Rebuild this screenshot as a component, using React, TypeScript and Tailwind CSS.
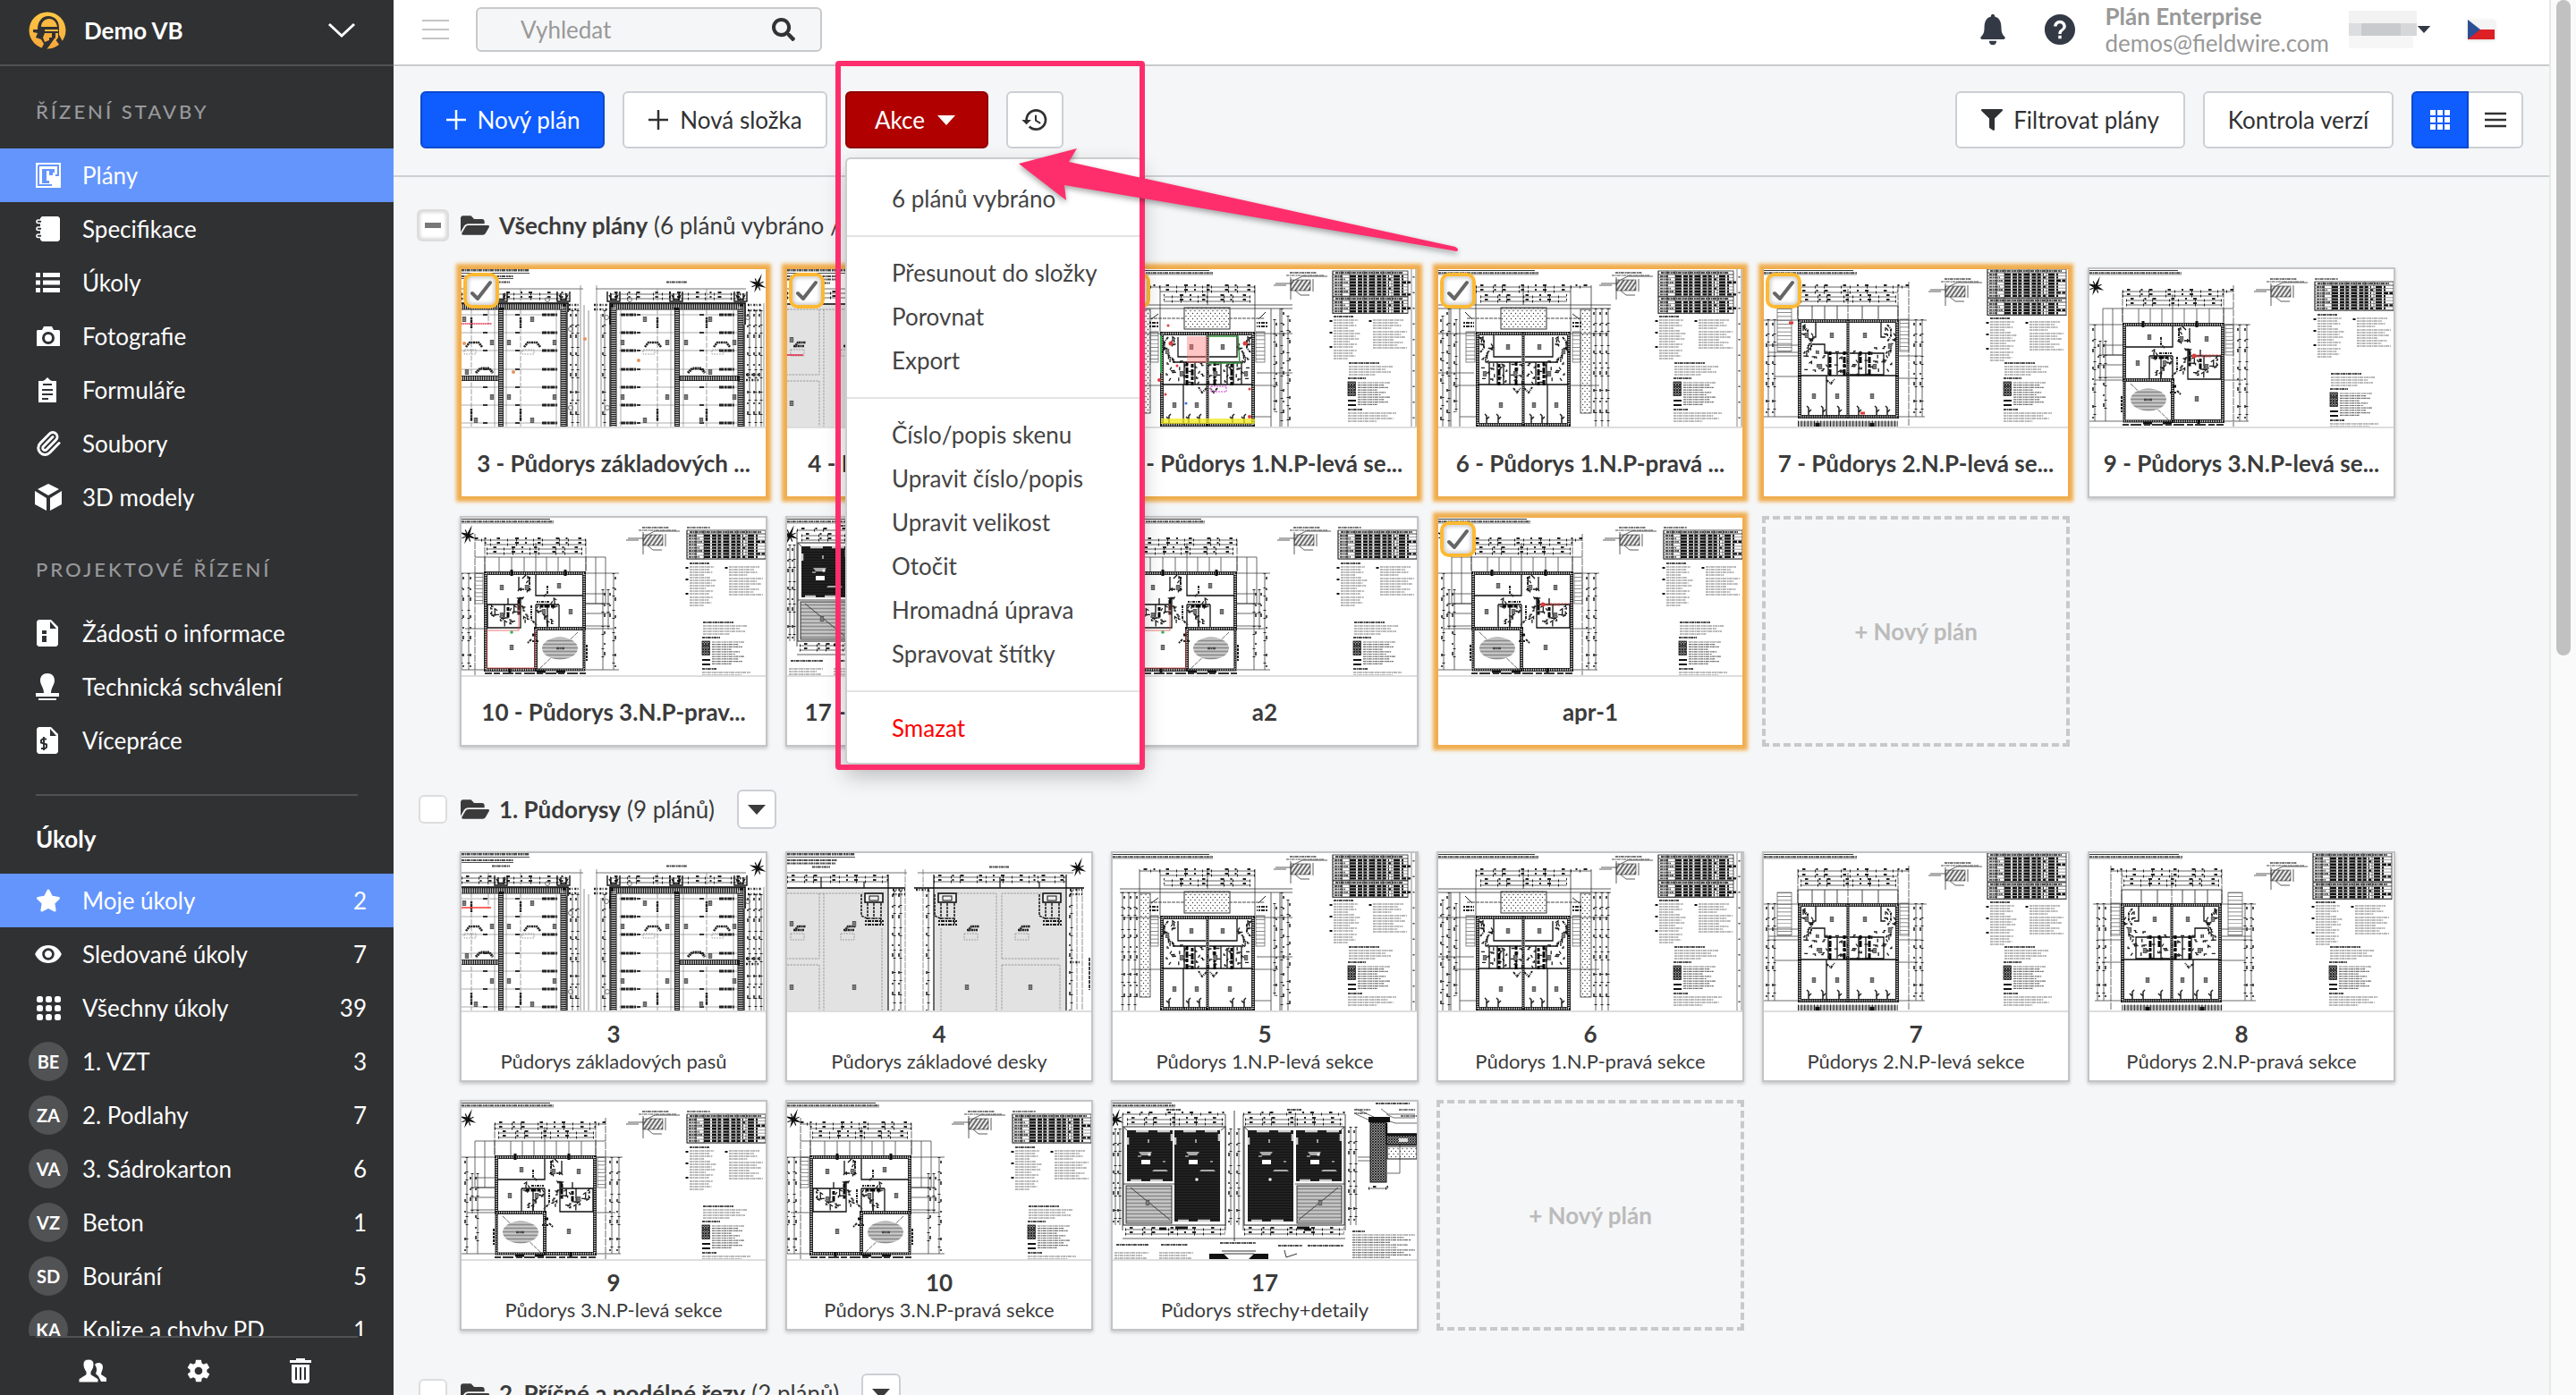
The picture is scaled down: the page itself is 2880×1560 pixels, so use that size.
import type { ReactNode } from "react";
import { FaFilter, FaFolderOpen, FaSearch, FaStar } from "react-icons/fa";
import { IoIosNotifications, IoMdEye, IoMdHelpCircle, IoMdSettings } from "react-icons/io";
import { MdHistory } from "react-icons/md";
import { Paperclip } from "lucide-react";

type PlanKind = "footing" | "slab" | "first" | "firstFlip" | "second" | "secondFlip" | "third" | "thirdFlip" | "roof";

type Sheet = {
  kind: PlanKind;
  title: string;
  subtitle?: string;
  selected?: boolean;
  marks?: ReactNode;
};

/* ---------- drawing helpers for the plan thumbnails ---------- */

function Words({ x, y, w, h = 2 }: { x: number; y: number; w: number; h?: number }) {
  return <path d={`M${x} ${y}h${w}`} stroke="#4a4a4a" strokeWidth={h} strokeDasharray="3 .6 1.4 .5 4.2 .9 2 .5" />;
}

function Paragraph({ x, y, w, rows, step = 3 }: { x: number; y: number; w: number; rows: number; step?: number }) {
  const widths = [1, 0.82, 0.94, 0.6, 0.88, 0.72];
  return (
    <g opacity=".8">
      {Array.from({ length: rows }, (_, i) => (
        <Words key={i} x={x} y={y + i * step} w={w * widths[i % 6]} h={1.2} />
      ))}
    </g>
  );
}

function DimH({ x, to, y }: { x: number; to: number; y: number }) {
  return (
    <g stroke="#222">
      <path d={`M${x} ${y}H${to}`} strokeWidth=".7" />
      <path d={`M${x + 5} ${y - 2}H${to}`} strokeWidth="1.8" strokeDasharray="3.5 12 2 7 4 17" />
      <path d={`M${x} ${y}H${to}`} strokeWidth="3" strokeDasharray="1 18 1 9" />
    </g>
  );
}

function DimV({ x, y, to }: { x: number; y: number; to: number }) {
  return (
    <g stroke="#222">
      <path d={`M${x} ${y}V${to}`} strokeWidth=".7" />
      <path d={`M${x - 2} ${y + 4}V${to}`} strokeWidth="1.6" strokeDasharray="3 10 2 8 4 16" />
      <path d={`M${x} ${y}V${to}`} strokeWidth="3" strokeDasharray="1 15 1 8" />
    </g>
  );
}

function Wall({ d, w = 4 }: { d: string; w?: number }) {
  return (
    <g fill="none">
      <path d={d} stroke="#161616" strokeWidth={w} strokeLinecap="square" />
      <path d={d} stroke="#fff" strokeWidth={w - 1.6} strokeDasharray="1 1" opacity=".75" />
    </g>
  );
}

// Small fittings, switches and door swings scattered over a room
function Fittings({ x, y, w, h, n }: { x: number; y: number; w: number; h: number; n: number }) {
  const shapes = ["h3v2", "v4", "h2v-2h2", "l2 3", "v2h-2", "h4", "l3 -2v3"];
  const d = Array.from({ length: n }, (_, i) => {
    const px = x + ((i * 37 + 11) % 97) * (w / 97);
    const py = y + ((i * 53 + 29) % 89) * (h / 89);
    return `M${px.toFixed(1)} ${py.toFixed(1)}${shapes[i % shapes.length]}`;
  });
  return <path d={d.join("")} fill="none" stroke="#1c1c1c" strokeWidth="1.3" />;
}

function Tags({ at }: { at: number[][] }) {
  return (
    <g>
      {at.map(([x, y]) => (
        <g key={`${x}-${y}`}>
          <rect x={x - 2.2} y={y - 3} width="4.4" height="6" fill="#555" />
          <path d={`M${x - 1.5} ${y - 1}h3M${x - 1.5} ${y + 1.2}h3`} stroke="#ddd" strokeWidth=".6" />
        </g>
      ))}
    </g>
  );
}

function Compass({ x, y }: { x: number; y: number }) {
  return (
    <g transform={`translate(${x} ${y}) rotate(22)`}>
      <path d="M0-13L1.5-2L10 0L1.5 1.5L0 10L-1.5 1.5L-10 0L-1.5-2Z" fill="#111" />
      <path d="M-5-5L5 5M5-5L-5 5" stroke="#111" strokeWidth="1.2" />
    </g>
  );
}

function SheetHead({ w = 110 }: { w?: number }) {
  return (
    <g>
      <path d={`M0 1.5H${w - 4}`} stroke="#333" strokeWidth="1" />
      <Words x={0} y={4.2} w={w} h={2} />
      <path d={`M0 6H${w}`} stroke="#555" strokeWidth=".6" />
    </g>
  );
}

function EaveDetail({ x, y }: { x: number; y: number }) {
  return (
    <g>
      <Words x={x} y={y - 3} w={30} h={1.6} />
      <Words x={x - 4} y={y} w={42} h={1} />
      <rect x={x + 1} y={y + 5} width="22" height="12" fill="url(#hatch)" stroke="#333" strokeWidth=".6" />
      <path
        d={`M${x + 1} ${y + 2}v25M${x - 16} ${y + 9}h17M${x - 18} ${y + 11}h14M${x + 6} ${y + 5}l8-4h28M${x + 26} ${y + 4}v14M${x + 6} ${y + 17}l6 5h10`}
        fill="none"
        stroke="#333"
        strokeWidth=".8"
      />
    </g>
  );
}

function Schedule({ x, y, rows, w = 88 }: { x: number; y: number; rows: number; w?: number }) {
  const cols = [0, 10, 19, 35, 46, 56, 66];
  return (
    <g>
      <rect x={x} y={y} width={w} height={rows * 3.4 + 5} fill="#fff" stroke="#222" strokeWidth=".8" />
      <path d={`M${x} ${y + 4}h${w}`} stroke="#222" strokeWidth=".8" />
      <Words x={x + 3} y={y + 2} w={w - 8} h={2} />
      {Array.from({ length: rows }, (_, i) => (
        <g key={i}>
          <path d={`M${x} ${y + 7.6 + i * 3.4}h${w}`} stroke="#333" strokeWidth=".5" />
          <Words x={x + 2} y={y + 6 + i * 3.4} w={9 + (i % 3) * 3} h={1.8} />
          <path
            d={`M${x + 19} ${y + 6 + i * 3.4}h${i % 3 === 1 ? 46 : 44}M${x + 68} ${y + 6 + i * 3.4}h${i % 4 === 2 ? 19 : 11}`}
            stroke="#111"
            strokeWidth="2.4"
            strokeDasharray="7 2 5 1.4 4 2"
          />
        </g>
      ))}
      <path d={cols.map((c) => `M${x + c} ${y}v${rows * 3.4 + 5}`).join("")} stroke="#222" strokeWidth=".6" />
    </g>
  );
}

function Notes({ x, y }: { x: number; y: number }) {
  return (
    <g>
      <Words x={x} y={y} w={22} h={2} />
      <Paragraph x={x} y={y + 4} w={27} rows={5} />
      <Paragraph x={x} y={y + 19} w={30} rows={6} />
      <Paragraph x={x} y={y + 38} w={26} rows={4} />
      <Paragraph x={x + 44} y={y + 4} w={34} rows={4} />
      <Paragraph x={x + 44} y={y + 17} w={38} rows={7} />
      <path d={`M${x - 3} ${y + 4}v2M${x - 3} ${y + 17}v2M${x - 3} ${y + 33}v2M${x + 41} ${y + 4}v2`} stroke="#111" strokeWidth="3" />
    </g>
  );
}

function Legend({ x, y }: { x: number; y: number }) {
  return (
    <g>
      <Words x={x + 1} y={y - 19} w={34} h={1.8} />
      <Paragraph x={x + 1} y={y - 15} w={50} rows={4} />
      <Words x={x} y={y - 2} w={20} h={2} />
      {[0, 5.5, 11].map((dy) => (
        <rect key={dy} x={x} y={y + dy + 2} width="8.5" height="4.5" fill="url(#dense)" stroke="#222" strokeWidth=".8" />
      ))}
      <path d={`M${x} ${y + 23}h9M${x} ${y + 28}h9`} stroke="#111" strokeWidth="1.8" />
      <Paragraph x={x + 11} y={y + 3} w={36} rows={10} step={2.7} />
      <Words x={x} y={y + 33} w={16} h={2} />
      <Paragraph x={x} y={y + 37} w={54} rows={4} />
    </g>
  );
}

function Stairs({ x, y, w = 13, h = 40 }: { x: number; y: number; w?: number; h?: number }) {
  return (
    <g>
      <rect x={x} y={y} width={w} height={h} fill="none" stroke="#555" strokeWidth=".7" />
      <path d={`M${x + w / 2} ${y}v${h}`} stroke="#666" strokeWidth={w} strokeDasharray=".7 3.6" />
    </g>
  );
}

function Footing() {
  const rows = [51, 71, 91, 112, 132, 152, 172];
  const boxes = [[3, 56], [79, 56], [205, 56], [278, 56], [34, 82], [53, 82], [104, 82], [180, 82], [230, 82], [251, 82], [305, 82], [34, 143], [53, 143], [104, 143], [180, 143], [230, 143], [251, 143], [305, 143], [6, 115], [278, 115], [16, 169], [79, 169], [205, 169], [268, 169]];
  return (
    <g>
      <Words x={0} y={1} w={76} h={3} />
      <path d="M0 4.5H76M0 10.5H58" stroke="#222" strokeWidth=".8" />
      <Words x={0} y={8} w={58} h={2} />
      <Words x={34} y={14.5} w={20} h={2} />
      <Words x={229} y={14.5} w={23} h={2} />
      <Compass x={331} y={17} />
      <path d="M0 22H136M150 22H318" stroke="#333" strokeWidth=".7" />
      <DimH x={0} to={120} y={28} />
      <DimH x={0} to={120} y={33} />
      <DimH x={166} to={318} y={28} />
      <DimH x={166} to={318} y={33} />
      {[44, 114, 170, 240, 312].map((x) => (
        <path key={x} d={`M${x - 7} 25v11h14V25M${x - 5} 29l3 5h4l3-5M${x - 3} 27v8M${x + 3} 27v8`} fill="none" stroke="#111" strokeWidth="1.4" />
      ))}
      {rows.map((y) => (
        <g key={y}>
          <path d={`M0 ${y}H108M176 ${y}H308`} stroke="#777" strokeWidth=".6" />
          <path d={`M24 ${y}h5M60 ${y}h5M196 ${y}h4M266 ${y}h5`} stroke="#333" strokeWidth="1.8" />
          {[90, 178, 288].map((x) => (
            <path key={x} d={`M${x} ${y}h17`} stroke="#222" strokeWidth="3.2" strokeDasharray="5 .7 3 .7" />
          ))}
        </g>
      ))}
      <path d="M30 22V62M66 22V176M219 22V176M274 22V176M11 44V176" stroke="#777" strokeWidth=".7" strokeDasharray="6 1.5" />
      {[70, 205, 282, 5].map((x) => (
        <g key={x}>
          <path d={`M${x} 87l4-5h10l4 5`} stroke="#222" strokeWidth="2.6" strokeDasharray="2 .6" fill="none" />
          <rect x={x - 2} y="90" width="13" height="5" fill="none" stroke="#888" strokeWidth=".7" strokeDasharray="2 1" />
        </g>
      ))}
      {[66, 219, 274, 11].map((x) => (
        <path key={x} d={`M${x} 54v12M${x} 156v14`} stroke="#222" strokeWidth="2.4" strokeDasharray="2 .5 4 .7" />
      ))}
      <path d="M16 116l5-5h10l4 5M253 116l5-5h10l4 5" stroke="#222" strokeWidth="3" strokeDasharray="2 .5" fill="none" />
      <Tags at={boxes} />
      <Wall d="M0 42H114V176" w={7} />
      <Wall d="M44 46V176M0 122H42" w={6} />
      <Wall d="M170 176V42H312V176" w={7} />
      <Wall d="M241 46V176M245 122H308" w={6} />
      <path d="M0 38H119V48M166 62V38H317V62" fill="none" stroke="#000" strokeWidth="1.6" />
      <path d="M118 48V176M166 48V176M316 62V176" stroke="#111" strokeWidth="1.2" />
      <path d="M37 46V176M50 46V176M106 46V176M178 46V176M234 46V176M248 46V176M304 46V176" stroke="#777" strokeWidth=".6" />
      {[124, 130, 160, 322, 329, 335].map((x) => (
        <DimV key={x} x={x} y={46} to={176} />
      ))}
      <path d="M133 18V176M137 40V176M142 46V176M151 18V176M156 50V176M338 38V176" stroke="#777" strokeWidth=".8" />
      <path d="M120 40h12M120 45h12M148 40h16M148 45h16M320 40h16M320 46h16M318 118h14M318 124h14" stroke="#222" strokeWidth="2.4" strokeDasharray="2 1.3 1 2" />
      <g fill="none" stroke="#555" strokeWidth=".8">
        <circle cx="122" cy="67" r="2.500" />
        <circle cx="122" cy="155" r="2.500" />
        <circle cx="162" cy="54" r="2.500" />
        <circle cx="320" cy="54" r="2.500" />
        <circle cx="163" cy="155" r="2.500" />
        <circle cx="96" cy="34" r="2.500" />
        <circle cx="188" cy="34" r="2.500" />
      </g>
    </g>
  );
}

function Slab() {
  return (
    <g>
      <Words x={0} y={1} w={76} h={3} />
      <path d="M0 4.5H76" stroke="#222" strokeWidth=".8" />
      <Words x={0} y={8} w={56} h={2} />
      <Words x={0} y={11.5} w={54} h={2} />
      <Words x={28} y={15.5} w={20} h={2} />
      <Words x={226} y={15.5} w={22} h={2} />
      <Compass x={325} y={17} />
      <path d="M0 40H113V176H0ZM164 40H312V176H164Z" fill="#e2e2e2" />
      <path d="M0 22H134M146 22H320" stroke="#333" strokeWidth=".7" />
      <DimH x={0} to={113} y={27} />
      <DimH x={0} to={113} y={32} />
      <DimH x={164} to={312} y={27} />
      <DimH x={164} to={312} y={32} />
      <path d="M0 39H132M142 39H332" stroke="#000" strokeWidth="1.6" />
      <path d="M113 24V176M164 24V176M312 24V176M38 27V39M86 32V39M238 27V39M282 32V39" stroke="#111" strokeWidth="1.2" />
      <path d="M0 45H86M36 45V118H0M41 45V176M36 125V176M0 125H36M106 84V176M172 84V176M190 45H234V176M240 118V45H284M240 118H305M240 125V176M240 125H305V176" fill="none" stroke="#888" strokeWidth=".8" strokeDasharray="2.4 1.2" />
      {[87, 169, 286].map((x) => (
        <g key={x}>
          <rect x={x} y="45" width="20" height="10" fill="#eee" stroke="#111" strokeWidth="1.6" />
          <rect x={x + 5} y="48" width="10" height="5" fill="none" stroke="#111" strokeWidth="1" />
          <path d={`M${x + 3} 56V74M${x + 10} 56V74M${x + 18} 56V80M${x - 4} 46v24l6 3h17`} fill="none" stroke="#222" strokeWidth="1.6" strokeDasharray="3 1" />
          <path d={`M${x} 76h21M${x} 80h21`} stroke="#111" strokeWidth="1.8" strokeDasharray="2 1 4 1" />
        </g>
      ))}
      {[8, 64, 202, 259].map((x) => (
        <g key={x}>
          <path d={`M${x} 87l4-5h9M${x - 1} 86h12`} fill="none" stroke="#222" strokeWidth="2.6" strokeDasharray="2 .5" />
          <rect x={x - 4} y="90" width="15" height="7" fill="none" stroke="#888" strokeWidth=".7" strokeDasharray="2 1" />
        </g>
      ))}
      <Tags at={[[5, 79], [75, 79], [5, 150], [75, 150], [201, 150], [272, 150]]} />
      {[120, 127, 158, 318].map((x) => (
        <DimV key={x} x={x} y={42} to={176} />
      ))}
      <path d="M132 18V176M152 18V176M324 40V176M330 40V176" stroke="#777" strokeWidth=".8" strokeDasharray="7 1" />
      <path d="M118 41h14M118 46h14M144 41h16M316 41h14M316 46h14M316 122h12" stroke="#222" strokeWidth="2.4" strokeDasharray="2 1.4 1 2" />
      <path d="M338 117v36" stroke="#444" strokeWidth="2" strokeDasharray="4 1" />
    </g>
  );
}

// Semi-detached floor with two mirrored flats
function FirstFloor({ flip }: { flip?: boolean }) {
  return (
    <g>
      <SheetHead w={112} />
      <EaveDetail x={198} y={7} />
      <Schedule x={246} y={2} rows={7} w={84} />
      <Schedule x={246} y={31} rows={4} w={84} />
      <Notes x={247} y={53} />
      <Legend x={263} y={124} />
      <path d="M334 0V176M339 0V176" stroke="#555" strokeWidth=".7" />
      <path d="M336.500 8V176" stroke="#444" strokeWidth="2" strokeDasharray="1.500 16" />
      <g transform={flip ? "translate(201 0) scale(-1 1)" : undefined}>
        <path d="M42 18V70M148 18V70M95 18V40M0 40H193M0 44H193M171 18V44M14 44V176M24 44V176" stroke="#333" strokeWidth=".8" />
        <DimH x={42} to={171} y={20} />
        <DimH x={42} to={148} y={25} />
        <DimH x={47} to={144} y={31} />
        <DimH x={47} to={144} y={36} />
        <rect x="70" y="43" width="51" height="24" fill="url(#dots)" stroke="#333" strokeWidth="1" />
        <rect x="159" y="45" width="12" height="116" fill="url(#dots)" stroke="#333" strokeWidth=".8" />
        <path d="M32 55H70M121 55H160" stroke="#333" strokeWidth=".9" strokeDasharray="4 1" />
        <path d="M28 60h12M28 64h12M150 60h10M150 64h10" stroke="#222" strokeWidth="2.2" strokeDasharray="2 1 4 1" />
        <Stairs x={31} y={70} w={10} h={34} />
        <Stairs x={150} y={70} w={9} h={34} />
        <Wall d="M44 72H146V174H44Z" />
        <Wall d="M95 72V174" w={3} />
        <path d="M62 74V98H93M57 104H93M57 104V129H91M80 104V129M97 98H128V76M97 104H134M109 104V129M121 104V129M44 129H146M122 129V174M66 104V129M73 108V129" fill="none" stroke="#111" strokeWidth="1.3" />
        <path d="M68 106V130M87 104V130M112 106V130M118 104V130" stroke="#000" strokeWidth="3" strokeDasharray="4 2 7 1" />
        <path d="M46 76l5 4v8l-4 5M139 76l4 5v8l4 5M84 133l4 5 4-5M96 133l5 5 4-6" fill="none" stroke="#222" strokeWidth="2" strokeDasharray="3 1 1 1" />
        <Fittings x={46} y={76} w={14} h={26} n={14} />
        <Fittings x={130} y={76} w={14} h={26} n={14} />
        <Fittings x={46} y={103} w={96} h={24} n={46} />
        {[54, 67, 104, 116, 138].map((x) => (
          <path key={x} d={`M${x} 172v-8l-2-2M${x} 168l3-3`} fill="none" stroke="#222" strokeWidth="1.5" />
        ))}
        <Tags at={[[78, 87], [113, 87], [52, 117], [86, 117], [70, 152], [107, 152], [132, 152], [124, 117], [140, 92]]} />
        <DimV x={5} y={52} to={176} />
        <DimV x={12} y={44} to={176} />
        <DimV x={20} y={56} to={160} />
        <DimV x={176} y={44} to={176} />
        <DimV x={183} y={44} to={176} />
        <DimV x={190} y={44} to={176} />
        <path d="M0 72H42M0 116H40M148 130H180M148 72H190M16 130H42M24 165H42" stroke="#444" strokeWidth=".8" />
        <path d="M30 48l8 8M150 50l8 6" stroke="#222" strokeWidth="1" />
      </g>
    </g>
  );
}

function SecondFloor({ flip }: { flip?: boolean }) {
  return (
    <g>
      <SheetHead w={104} />
      <EaveDetail x={202} y={14} />
      <Schedule x={250} y={0} rows={8} />
      <Schedule x={250} y={33} rows={4} />
      <Notes x={253} y={55} />
      <Legend x={268} y={124} />
      <g transform={flip ? "translate(186 0) scale(-1 1)" : undefined}>
        <path d="M38 18V56M150 18V56M94 22V56M162 14V176" stroke="#444" strokeWidth=".8" strokeDasharray="8 1" />
        <DimH x={38} to={162} y={20} />
        <DimH x={38} to={150} y={26} />
        <DimH x={41} to={148} y={31} />
        <DimH x={41} to={148} y={36} />
        <path d="M38 41H150M38 41V56M54 41V56M68 41V56M82 41V56M110 41V56M128 41V56M150 41V56" stroke="#333" strokeWidth=".9" />
        <path d="M38 170V176H150V170Z" fill="#bbb" />
        <path d="M38 173H150" stroke="#222" strokeWidth="7" strokeDasharray="1 2.6" />
        <Stairs x={15} y={44} w={16} h={48} />
        <Stairs x={152} y={56} w={10} h={36} />
        <Wall d="M40 58H149V165H40Z" />
        <Wall d="M94 58V165" w={3} />
        <path d="M58 60V76H54M131 60V76H136M54 84H68V94H94M96 94H134V118H96M72 94V118M82 94V118M114 94V118M38 119H150M70 119V165M106 94V118" fill="none" stroke="#111" strokeWidth="1.3" />
        <path d="M74 92V120M90 92V120M108 92V106M118 92V118" stroke="#000" strokeWidth="3" strokeDasharray="4 2 7 1" />
        <path d="M44 64l5 4v8l4 5v6M138 62l4 5v8l-4 6M70 124l5 4 4-5" fill="none" stroke="#222" strokeWidth="2" strokeDasharray="3 1 1 1" />
        <Fittings x={42} y={62} w={12} h={34} n={14} />
        <Fittings x={134} y={62} w={12} h={34} n={12} />
        <Fittings x={42} y={88} w={102} h={30} n={52} />
        {[50, 66, 84, 106, 126, 138].map((x) => (
          <path key={x} d={`M${x} 163v-8l-2-2M${x} 160l3-3`} fill="none" stroke="#222" strokeWidth="1.5" />
        ))}
        <Tags at={[[76, 74], [113, 74], [48, 74], [141, 86], [56, 142], [82, 142], [121, 142], [63, 109], [124, 109]]} />
        <path d="M60 176v-4M121 176v-4" stroke="#111" strokeWidth="5" />
        <DimV x={5} y={56} to={165} />
        <DimV x={12} y={56} to={165} />
        <DimV x={170} y={56} to={165} />
        <DimV x={177} y={56} to={165} />
        <path d="M0 57H38M5 85H38M5 93H38M5 97H38M12 120H38M0 165H180M150 57H182M150 97H176M150 122H172" stroke="#444" strokeWidth=".8" />
      </g>
    </g>
  );
}

function ThirdFloor({ flip }: { flip?: boolean }) {
  return (
    <g>
      <SheetHead w={103} />
      <Compass x={7} y={20} />
      <EaveDetail x={202} y={14} />
      <Words x={252} y={11} w={26} h={1.6} />
      <Schedule x={252} y={14} rows={8} />
      <Notes x={255} y={51} />
      <Legend x={269} y={136} />
      <g transform={flip ? "translate(176 0) scale(-1 1)" : undefined}>
        <path d="M37 24V60M150 24V60M93 28V44M161 18V176" stroke="#444" strokeWidth=".8" strokeDasharray="8 1" />
        <DimH x={37} to={161} y={25} />
        <DimH x={37} to={150} y={30} />
        <DimH x={41} to={148} y={35} />
        <DimH x={41} to={148} y={40} />
        <path d="M15 44H161M37 44V60M55 44V60M68 44V60M81 44V60M93 44V60M106 44V60M120 44V60M134 44V60M150 44V60M15 44V96H37M26 44V96M15 85H37" fill="none" stroke="#444" strokeWidth=".8" />
        <Stairs x={152} y={62} w={9} h={34} />
        <Wall d="M39 62H149V170H93V124H39Z" />
        <Wall d="M39 124V170H93" w={3} />
        <path d="M93 64V87H40M67 97H93M67 97V122M110 97H147V123H110ZM110 90V97H124V90M112 66V80H106M93 97V124M80 97V122M128 97V108M104 64l4 4" fill="none" stroke="#111" strokeWidth="1.3" />
        <path d="M112 92V110M124 100V112M72 99h16" stroke="#000" strokeWidth="3" strokeDasharray="4 1.500 6 1" />
        <path d="M100 66v14M78 94h14M80 76v8l4 4M98 98v16l-6 6" fill="none" stroke="#222" strokeWidth="2" strokeDasharray="3 1 1 1" />
        <Fittings x={98} y={64} w={14} h={54} n={18} />
        <Fittings x={112} y={99} w={32} h={20} n={24} />
        <Fittings x={68} y={90} w={24} h={30} n={18} />
        <path d="M46 128l44 42M40 126v40" stroke="#444" strokeWidth=".8" strokeDasharray="5 1" />
        <ellipse cx="66" cy="146" rx="20" ry="12.500" fill="url(#stripes)" />
        <Words x={61} y={146} w={9} h={2.4} />
        <path d="M36 142v18M90 138h7M98 136l4 4" stroke="#222" strokeWidth="2" strokeDasharray="3 1" />
        <Tags at={[[67, 76], [131, 78], [103, 78], [54, 105], [84, 105], [131, 109], [120, 145]]} />
        <path d="M60 172h10M82 172h10M122 168v6M60 58v7M120 58v7M93 131h4" stroke="#111" strokeWidth="3" />
        <path d="M37 174H150" stroke="#333" strokeWidth="2" strokeDasharray="7 2 12 3" />
        <DimV x={6} y={62} to={170} />
        <DimV x={12} y={80} to={125} />
        <DimV x={18} y={80} to={170} />
        <DimV x={168} y={62} to={170} />
        <DimV x={176} y={62} to={170} />
        <path d="M0 62H37M10 96H37M10 107H37M10 121H37M6 124H37M0 170H37M150 62H180M150 124H172M150 170H178" stroke="#444" strokeWidth=".8" />
      </g>
    </g>
  );
}

function Roof() {
  return (
    <g>
      <SheetHead w={70} />
      <Compass x={3} y={20} />
      <Words x={60} y={9} w={16} />
      <Words x={195} y={9} w={16} />
      <DimH x={11} to={126} y={14} />
      <DimH x={146} to={260} y={14} />
      <DimH x={16} to={124} y={20} />
      <DimH x={148} to={257} y={20} />
      <DimH x={16} to={124} y={25} />
      <DimH x={148} to={257} y={25} />
      <path d="M11 14V144M126 14V144M146 14V144M260 14V144M136 10V156M69 16V30M204 16V30" stroke="#333" strokeWidth=".9" />
      <rect x="12" y="28" width="114" height="110" fill="#fff" stroke="#222" strokeWidth="1" />
      <rect x="147" y="28" width="112" height="110" fill="#fff" stroke="#222" strokeWidth="1" />
      {[
        [16, 57],
        [69, 102],
        [151, 102],
        [205, 57],
      ].map(([x, h]) => (
        <g key={x}>
          <rect x={x} y="32" width="51" height={h} fill="#151515" />
          <rect x={x} y="32" width="51" height={h} fill="url(#tiles)" />
          <path d={`M${x + 10} 33h14M${x + 34} 33h14M${x + 1} 40v8M${x + 50} 36v8M${x + 4} ${h + 31}h12M${x + 26} ${h + 31}h14`} stroke="#ccc" strokeWidth="2.6" />
          <path d={`M${x + 13} 56h15l-3 4h-9zM${x + 30} 76h14l2 2H${x + 28}z`} fill="#aaa" />
          <rect x={x + 16} y="65" width="10" height="5" fill="#fff" />
          <circle cx={x + 25} cy={h > 60 ? 87 : 59} r="1.800" fill="#eee" />
          <path d={`M${x + 24} 42v4M${x + 12} 61h4M${x + 40} 67h3`} stroke="#eee" strokeWidth="1.200" />
        </g>
      ))}
      <rect x="15" y="94" width="51" height="42" fill="url(#stripes)" stroke="#333" strokeWidth="1" />
      <rect x="206" y="94" width="50" height="42" fill="url(#stripes)" stroke="#333" strokeWidth="1" />
      <path d="M12 92H69M204 92H260M20 96l44 36M252 96l-44 36M12 28l4 4M126 28l-5 4M147 28l4 4M259 28l-4 4" stroke="#333" strokeWidth=".9" />
      <Tags at={[[39, 113], [232, 113]]} />
      <DimH x={14} to={126} y={143} />
      <DimH x={147} to={259} y={143} />
      <DimH x={14} to={126} y={148} />
      <DimH x={147} to={259} y={148} />
      <path d="M11 153H260" stroke="#333" strokeWidth=".8" />
      <path d="M52 142h8M70 141h14M206 141h14M214 143h8" stroke="#111" strokeWidth="3" />
      <DimV x={3} y={30} to={138} />
      <DimV x={8} y={30} to={138} />
      <DimV x={132} y={30} to={138} />
      <DimV x={141} y={30} to={138} />
      <DimV x={266} y={28} to={138} />
      <DimV x={272} y={28} to={138} />
      <Words x={4} y={160} w={36} />
      <Words x={54} y={160} w={30} />
      <Words x={120} y={158} w={40} />
      <Words x={185} y={161} w={27} />
      <Words x={218} y={161} w={40} />
      <Paragraph x={2} y={169} w={38} rows={3} />
      <Paragraph x={52} y={169} w={38} rows={3} />
      <path d="M108 170h16l6 6h-22zM174 170h-16l-6 6h22z" fill="#111" />
      <path d="M124 170h34M122 167h38M192 166l2 8 12-4" fill="none" stroke="#333" strokeWidth="1" />
      <Words x={268} y={145} w={14} />
      <Paragraph x={268} y={149} w={70} rows={10} step={2.8} />
      <Words x={294} y={2} w={38} />
      <path d="M272 8l22 10M272 14l18 8M300 8l8 6h30M306 14l8 4h24M310 22l6 2h24M274 62h14M274 66h14M307 80h14v-40" fill="none" stroke="#444" strokeWidth=".8" />
      <Words x={270} y={9} w={18} h={1.4} />
      <Words x={270} y={13} w={14} h={1.4} />
      <Words x={320} y={9} w={18} h={1.4} />
      <Words x={322} y={16} w={18} h={1.4} />
      <rect x="286" y="17" width="24" height="6" fill="#111" />
      <rect x="288" y="23" width="18" height="67" fill="url(#dense)" stroke="#111" strokeWidth="1" />
      <path d="M306 36h34v12h-34z" fill="url(#dense)" stroke="#111" strokeWidth="1.6" />
      <path d="M306 24v13h34" fill="none" stroke="#111" strokeWidth="2.4" />
      <rect x="307" y="50" width="33" height="14" fill="url(#dots)" stroke="#111" strokeWidth="1" />
      <rect x="320" y="41" width="10" height="4" fill="#ddd" />
      <DimH x={286} to={308} y={97} />
    </g>
  );
}

function PlanDrawing({ kind }: { kind: PlanKind }) {
  switch (kind) {
    case "footing":
      return <Footing />;
    case "slab":
      return <Slab />;
    case "first":
      return <FirstFloor />;
    case "firstFlip":
      return <FirstFloor flip />;
    case "second":
      return <SecondFloor />;
    case "secondFlip":
      return <SecondFloor flip />;
    case "third":
      return <ThirdFloor />;
    case "thirdFlip":
      return <ThirdFloor flip />;
    default:
      return <Roof />;
  }
}

function SharedPatterns() {
  return (
    <svg className="absolute h-0 w-0" aria-hidden="true">
      <defs>
        <pattern id="hatch" width="4" height="4" patternUnits="userSpaceOnUse" patternTransform="rotate(35)">
          <rect width="4" height="4" fill="#eee" />
          <path d="M1 0V4" stroke="#333" strokeWidth="1.4" />
        </pattern>
        <pattern id="dense" width="3" height="3" patternUnits="userSpaceOnUse">
          <rect width="3" height="3" fill="#999" />
          <path d="M0 0L3 3M3 0L0 3" stroke="#222" strokeWidth=".9" />
        </pattern>
        <pattern id="dots" width="5" height="6" patternUnits="userSpaceOnUse">
          <circle cx="1.5" cy="1.5" r=".7" fill="#333" />
          <circle cx="4" cy="4.500" r=".7" fill="#333" />
        </pattern>
        <pattern id="stripes" width="10" height="4" patternUnits="userSpaceOnUse">
          <rect width="10" height="4" fill="#ccc" />
          <path d="M0 1.500H10" stroke="#8c8c8c" strokeWidth="1.800" />
        </pattern>
        <pattern id="tiles" width="3" height="3" patternUnits="userSpaceOnUse">
          <path d="M0 1H3" stroke="#3a3a3a" strokeWidth=".6" />
        </pattern>
      </defs>
    </svg>
  );
}

/* ---------- icons ---------- */

function Logo() {
  return (
    <svg viewBox="0 0 42 42" className="h-[42px] w-[42px]" aria-hidden="true">
      <defs>
        <linearGradient id="logo" x1="0" y1="0" x2="0" y2="1">
          <stop offset="0" stopColor="#ffc845" />
          <stop offset="1" stopColor="#f5a83a" />
        </linearGradient>
      </defs>
      <circle cx="21" cy="21" r="20.5" fill="url(#logo)" />
      <path d="M5 20h5c0-9 5-15 12-15 7 0 12 5 12 13v8l5 9-4 3-6-8-4 6-5 6h-6l3-6-3-5-6-2 2-5-5-1z" fill="#303133" />
      <path d="M14 17c0-5 4-9 9-9 4 0 8 3 9 9zM18 20h15v2H18z" fill="#fdb940" />
      <path d="M18 24h8v5h-3v3l-5 2-2-5zM30 24h3v5l-7 9-2-1 6-8z" fill="#f7ad3c" />
    </svg>
  );
}

const box = "h-7 w-7";

const icons: Record<string, ReactNode> = {
  plans: (
    <svg viewBox="0 0 28 28" className={box}>
      <path d="M0 0h28v28H0z" fill="currentColor" />
      <path d="M3 3h22v11h-3M25 3v11M3 3v22h15" fill="none" stroke="#6495fd" strokeWidth="2" />
      <path d="M7 7h14v4h-2v3h-4V9h-3v11h3v3H7z" fill="#6495fd" />
    </svg>
  ),
  specs: (
    <svg viewBox="0 0 28 28" className={box}>
      <path d="M7 0h18l2 2v24l-2 2H7l-2-2V2z" fill="currentColor" />
      <g fill="#303133" stroke="currentColor" strokeWidth="1.600">
        <rect x="1" y="4" width="6" height="3.500" rx="1.700" />
        <rect x="1" y="12" width="6" height="3.500" rx="1.700" />
        <rect x="1" y="20" width="6" height="3.500" rx="1.700" />
      </g>
    </svg>
  ),
  tasks: (
    <svg viewBox="0 0 28 28" className={box} fill="currentColor">
      <path d="M0 3h5v5H0zM0 11.500h5v5H0zM0 20h5v5H0zM8 3h19v5H8zM8 11.500h19v5H8zM8 20h19v5H8z" />
    </svg>
  ),
  photos: (
    <svg viewBox="0 0 28 28" className={box} fill="currentColor">
      <path fillRule="evenodd" d="M9 3h9l2 4h6l1 1v17H1V8l1-1h5zM14 9a7 7 0 1 0 0 14 7 7 0 0 0 0-14zm0 3a4 4 0 1 1 0 8 4 4 0 0 1 0-8z" />
    </svg>
  ),
  forms: (
    <svg viewBox="0 0 28 28" className={box} fill="currentColor">
      <path fillRule="evenodd" d="M3 4h5l2-1 3-3 3 3 2 1h5v24H3zM8 7v2h10V7zm-1 6v2h12v-2zm0 5v2h12v-2zm0 5v2h7v-2z" />
    </svg>
  ),
  files: <Paperclip className="h-[30px] w-[30px]" strokeWidth={2.4} />,
  models: (
    <svg viewBox="0 0 30 30" className="h-[30px] w-[30px]" fill="currentColor">
      <path d="M15 0l12 6-12 7L3 6zM0 8l13 8v14L0 23zM30 8L17 16v14l13-7z" />
    </svg>
  ),
  rfi: (
    <svg viewBox="0 0 28 30" className="h-[30px] w-7">
      <path d="M3 0h14l8 8v20l-2 2H3l-2-2V2z" fill="currentColor" />
      <path d="M16 2v8h7zM7 12h5v4H7zM7 18h5v7H7z" fill="#303133" />
    </svg>
  ),
  submittals: (
    <svg viewBox="0 0 28 30" className="h-[30px] w-7" fill="currentColor">
      <path d="M13 0c5 0 8 3 8 8 0 5-4 8-4 14h9v4H0v-4h9c0-6-4-9-4-14 0-5 3-8 8-8zM3 28h20v2H3z" />
    </svg>
  ),
  changes: (
    <svg viewBox="0 0 28 30" className="h-[30px] w-7">
      <path d="M3 0h14l8 8v20l-2 2H3l-2-2V2z" fill="currentColor" />
      <path d="M16 2v8h7z" fill="#303133" />
      <path d="M12 13.500H7.500l-1.500 1.500v2.500l6 2v3L10.500 24H6M9 11v15" fill="none" stroke="#303133" strokeWidth="2" />
    </svg>
  ),
  star: <FaStar className="h-7 w-7" />,
  eye: <IoMdEye className="h-[34px] w-[34px]" />,
  all: (
    <svg viewBox="0 0 28 28" className={box} fill="currentColor">
      {[1, 11, 21].map((y) => [1, 11, 21].map((x) => <rect key={`${x}-${y}`} x={x} y={y} width="7" height="7" rx="2.500" />))}
    </svg>
  ),
};

function TeamIcon() {
  return (
    <svg viewBox="0 0 32 26" className="h-[26px] w-8" fill="currentColor">
      <path d="M18 6c2-3 9-3 9 3 0 3-2 5-2 8l6 4v4h-6l-3-6-3-3c2-4 1-7-1-10z" />
      <path d="M11 0c8 0 7 9 3 14v3l8 5v4H0v-4l8-5v-3C4 9 3 0 11 0z" stroke="#303133" strokeWidth="1" />
    </svg>
  );
}

function TrashIcon() {
  return (
    <svg viewBox="0 0 26 28" className="h-7 w-[26px]">
      <path d="M8 0h10v2h7v3H1V2h7zM3 7h20v19l-2 2H5l-2-2z" fill="currentColor" />
      <path d="M8 10v14M13 10v14M18 10v14" stroke="#303133" strokeWidth="2" />
    </svg>
  );
}

function PlusIcon() {
  return (
    <svg viewBox="0 0 24 24" className="h-6 w-6" aria-hidden="true">
      <path d="M12 1v22M1 12h22" stroke="currentColor" strokeWidth="2.5" />
    </svg>
  );
}

function Caret({ className }: { className: string }) {
  return (
    <svg viewBox="0 0 20 11" className={className} aria-hidden="true">
      <path d="M0 0h20L10 11z" fill="currentColor" />
    </svg>
  );
}

function Tick() {
  return (
    <svg viewBox="0 0 24 24" className="pointer-events-none absolute h-6 w-6" aria-hidden="true">
      <path d="M2 15l6 6L22 3" fill="none" stroke="#666" strokeWidth="4" strokeLinecap="round" strokeLinejoin="round" />
    </svg>
  );
}

/* ---------- data ---------- */

const buildNav = [
  { icon: "plans", label: "Plány", active: true },
  { icon: "specs", label: "Specifikace" },
  { icon: "tasks", label: "Úkoly" },
  { icon: "photos", label: "Fotografie" },
  { icon: "forms", label: "Formuláře" },
  { icon: "files", label: "Soubory" },
  { icon: "models", label: "3D modely" },
];

const projectNav = [
  { icon: "rfi", label: "Žádosti o informace" },
  { icon: "submittals", label: "Technická schválení" },
  { icon: "changes", label: "Vícepráce" },
];

const taskNav = [
  { icon: "star", label: "Moje úkoly", count: 2, active: true },
  { icon: "eye", label: "Sledované úkoly", count: 7 },
  { icon: "all", label: "Všechny úkoly", count: 39 },
  { badge: "BE", label: "1. VZT", count: 3 },
  { badge: "ZA", label: "2. Podlahy", count: 7 },
  { badge: "VA", label: "3. Sádrokarton", count: 6 },
  { badge: "VZ", label: "Beton", count: 1 },
  { badge: "SD", label: "Bourání", count: 5 },
  { badge: "KA", label: "Kolize a chyby PD", count: 1 },
];

const menuGroups = [
  ["Přesunout do složky", "Porovnat", "Export"],
  ["Číslo/popis skenu", "Upravit číslo/popis", "Upravit velikost", "Otočit", "Hromadná úprava", "Spravovat štítky"],
];

const footingMarks = (
  <g>
    <path d="M0 61H34" stroke="#e2304a" strokeWidth="1.6" strokeDasharray="1.500 .5" />
    <g fill="#e8935a">
      <circle cx="3" cy="83" r="2" />
      <circle cx="58" cy="115" r="2" />
      <circle cx="138" cy="78" r="2" />
      <circle cx="198" cy="102" r="2" />
    </g>
  </g>
);

const firstMarks = (
  <g>
    <rect x="83" y="75" width="23" height="30" fill="#ff6b6b" opacity=".4" />
    <path d="M106 75h34l2 30h-36" fill="none" stroke="#2f8f3a" strokeWidth="1.4" />
    <path d="M54 74v42" stroke="#2fa84a" strokeWidth="2" />
    <path d="M54 170H159" stroke="#f1e71c" strokeWidth="6" opacity=".75" />
    <rect x="110" y="131" width="17" height="6" fill="none" stroke="#d63bd6" strokeWidth="1" strokeDasharray="2 1" />
    <g fill="#e23b3b">
      <circle cx="65" cy="83" r="2.500" />
      <circle cx="148" cy="83" r="2.500" />
      <circle cx="62" cy="63" r="1.500" />
      <circle cx="52" cy="124" r="2" />
      <circle cx="59" cy="140" r="1.500" />
      <circle cx="153" cy="134" r="1.500" />
      <circle cx="153" cy="165" r="2" />
      <circle cx="72" cy="108" r="1.500" />
    </g>
    <circle cx="82" cy="150" r="1.500" fill="#3b6fe2" />
  </g>
);

const roomMarks = (
  <g>
    <path d="M28 126V168H82V126M64 97V126H28" fill="none" stroke="#e2504f" strokeWidth=".8" />
    <circle cx="56" cy="128" r="1.800" fill="#37b35a" />
  </g>
);

const bathMarks = (
  <g>
    <path d="M117 96H147M117 98H136" stroke="#e23b3b" strokeWidth=".8" strokeDasharray="3 1" />
    <circle cx="117" cy="97" r="2.500" fill="#e23b3b" />
  </g>
);

const allPlans: Sheet[] = [
  { kind: "footing", title: "3 - Půdorys základových ...", selected: true, marks: footingMarks },
  { kind: "slab", title: "4 - Půdorys základové d...", selected: true, marks: <path d="M0 96H18" stroke="#e2304a" strokeWidth="1.600" /> },
  { kind: "firstFlip", title: "5 - Půdorys 1.N.P-levá se...", selected: true, marks: firstMarks },
  { kind: "first", title: "6 - Půdorys 1.N.P-pravá ...", selected: true },
  { kind: "second", title: "7 - Půdorys 2.N.P-levá se...", selected: true, marks: <path d="M28 60h5M108 161h5" stroke="#e23b3b" strokeWidth="3" /> },
  { kind: "third", title: "9 - Půdorys 3.N.P-levá se...", marks: bathMarks },
  { kind: "thirdFlip", title: "10 - Půdorys 3.N.P-prav...", marks: roomMarks },
  { kind: "roof", title: "17 - Půdorys střechy+de..." },
  { kind: "thirdFlip", title: "a2", marks: roomMarks },
  { kind: "third", title: "apr-1", selected: true, marks: bathMarks },
];

const floorPlans: Sheet[] = [
  { kind: "footing", title: "3", subtitle: "Půdorys základových pasů", marks: <path d="M0 61H33" stroke="#f33" strokeWidth="1.400" /> },
  { kind: "slab", title: "4", subtitle: "Půdorys základové desky" },
  { kind: "firstFlip", title: "5", subtitle: "Půdorys 1.N.P-levá sekce" },
  { kind: "first", title: "6", subtitle: "Půdorys 1.N.P-pravá sekce" },
  { kind: "second", title: "7", subtitle: "Půdorys 2.N.P-levá sekce" },
  { kind: "secondFlip", title: "8", subtitle: "Půdorys 2.N.P-pravá sekce" },
  { kind: "third", title: "9", subtitle: "Půdorys 3.N.P-levá sekce" },
  { kind: "thirdFlip", title: "10", subtitle: "Půdorys 3.N.P-pravá sekce" },
  { kind: "roof", title: "17", subtitle: "Půdorys střechy+detaily" },
];

/* ---------- layout pieces ---------- */

type NavItem = { icon?: string; badge?: string; label: string; count?: number; active?: boolean };

function NavRow({ item }: { item: NavItem }) {
  return (
    <a href="#" className={`flex h-[60px] shrink-0 items-center pr-[30px] pl-8 text-[26px] text-white ${item.active ? "bg-[#6495fd]" : ""}`}>
      <span className="flex w-[60px] shrink-0 items-center">
        {item.badge ? (
          <span className="flex h-11 w-11 items-center justify-center rounded-full bg-[#515254] text-[20px] font-bold">{item.badge}</span>
        ) : (
          <span className="flex w-11 justify-center">{icons[item.icon ?? "all"]}</span>
        )}
      </span>
      <span className="flex-1 truncate">{item.label}</span>
      {item.count !== undefined && <span>{item.count}</span>}
    </a>
  );
}

function NavLabel({ children }: { children: ReactNode }) {
  return <h2 className="h-[92px] shrink-0 pt-9 pl-10 text-[22px] leading-[30px] font-medium tracking-[3px] text-[#98999c]">{children}</h2>;
}

function Sidebar() {
  return (
    <aside className="flex w-[440px] shrink-0 flex-col bg-[#303133] text-white">
      <button className="flex h-[74px] shrink-0 items-center border-b-2 border-[#505153] pr-[42px] pb-1 pl-8 text-left">
        <Logo />
        <span className="ml-5 flex-1 text-[26px] font-bold">Demo VB</span>
        <svg viewBox="0 0 32 18" className="h-[18px] w-8" aria-hidden="true">
          <path d="M2 2l14 13L30 2" fill="none" stroke="currentColor" strokeWidth="3" />
        </svg>
      </button>
      <nav className="flex min-h-0 flex-1 flex-col overflow-hidden">
        <NavLabel>ŘÍZENÍ STAVBY</NavLabel>
        {buildNav.map((item) => (
          <NavRow key={item.label} item={item} />
        ))}
        <NavLabel>PROJEKTOVÉ ŘÍZENÍ</NavLabel>
        {projectNav.map((item) => (
          <NavRow key={item.label} item={item} />
        ))}
        <hr className="mx-10 mt-[30px] shrink-0 border-t-2 border-[#505153]" />
        <h2 className="h-[87px] shrink-0 pt-8 pl-10 text-[26px] leading-8 font-bold">Úkoly</h2>
        {taskNav.map((item) => (
          <NavRow key={item.label} item={item} />
        ))}
      </nav>
      <div className="mx-10 flex h-[66px] shrink-0 items-center justify-between border-t-2 border-[#505153] pt-2.5 pr-[51px] pl-12">
        <button aria-label="Lidé"><TeamIcon /></button>
        <button aria-label="Nastavení"><IoMdSettings className="h-[30px] w-[30px]" /></button>
        <button aria-label="Koš"><TrashIcon /></button>
      </div>
    </aside>
  );
}

function TopBar() {
  return (
    <header className="flex h-[74px] shrink-0 items-center border-b-2 border-[#c8c9cb] bg-white pr-[61px] pb-1.5 pl-8">
      <button aria-label="Menu" className="flex w-[30px] flex-col gap-2">
        <span className="h-0.5 bg-[#c4c4c4]" />
        <span className="h-0.5 bg-[#c4c4c4]" />
        <span className="h-0.5 bg-[#c4c4c4]" />
      </button>
      <label className="ml-[30px] flex h-[50px] w-[387px] items-center rounded-md border-2 border-[#c8c9cb] bg-[#f5f6f7] pr-7 pl-12">
        <input type="search" placeholder="Vyhledat" aria-label="Vyhledat" className="min-w-0 flex-1 bg-transparent text-[26px] outline-none placeholder:text-[#999]" />
        <FaSearch className="h-[26px] w-[26px] text-[#333]" />
      </label>
      <div className="ml-auto flex items-center">
        <button aria-label="Oznámení"><IoIosNotifications className="h-11 w-11 text-[#333a45]" /></button>
        <button aria-label="Nápověda" className="ml-8"><IoMdHelpCircle className="h-[42px] w-[42px] text-[#333a45]" /></button>
        <div className="ml-[30px] text-[26px] leading-[30px] text-[#999]">
          <p className="font-bold">Plán Enterprise</p>
          <p>demos@fieldwire.com</p>
        </div>
        <button aria-label="Účet" className="ml-[22px] flex items-center">
          <span className="flex h-[42px] w-[76px] flex-col">
            <span className="flex-1 bg-[#f2f2f2]" />
            <span className="flex flex-1">
              <span className="w-[14px] bg-[#dcdddf]" />
              <span className="flex-1 bg-[#c9cacd]" />
              <span className="w-[18px] bg-[#d6d7d9]" />
            </span>
            <span className="mr-1 flex-1 bg-[#f6f6f6]" />
          </span>
          <Caret className="h-2 w-4 text-[#333a45]" />
        </button>
        <button aria-label="Čeština" className="ml-[41px]">
          <svg viewBox="0 0 30 22" className="h-[22px] w-[30px] drop-shadow">
            <path d="M0 0h30v11H0z" fill="#f4f4f4" />
            <path d="M0 11h30v11H0z" fill="#dd1f26" />
            <path d="M0 0l14 11L0 22z" fill="#2c4f94" />
          </svg>
        </button>
      </div>
    </header>
  );
}

function ActionsMenu() {
  return (
    <div role="menu" className="absolute top-[74px] left-0 z-20 w-[332px] rounded-md border-2 border-[#ccc] bg-white pb-[14px] text-[26px] text-[#444] shadow-[0_12px_24px_rgba(0,0,0,0.25)]">
      <p className="mt-5 flex h-[49px] items-center pl-[50px]">6 plánů vybráno</p>
      {menuGroups.map((group) => (
        <div key={group[0]} className="mt-4 border-t-2 border-[#e2e3e4] pt-4">
          {group.map((label) => (
            <button key={label} role="menuitem" className="flex h-[49px] w-full items-center pl-[50px]">
              {label}
            </button>
          ))}
        </div>
      ))}
      <div className="mt-4 border-t-2 border-[#e2e3e4] pt-4">
        <button role="menuitem" className="flex h-[49px] w-full items-center pl-[50px] text-[#fe0000]">
          Smazat
        </button>
      </div>
    </div>
  );
}

function Toolbar() {
  const plain = "flex h-16 items-center justify-center rounded-md border-2 border-[#cdcfd4] bg-white text-[26px] text-[#303133]";
  return (
    <div className="flex h-[124px] shrink-0 items-center border-b-2 border-[#cdcfd4] pr-[29px] pb-0.5 pl-[30px]">
      <button className="flex h-16 w-[206px] items-center justify-center gap-3 rounded-md border-2 border-[#0b49cf] bg-[#0f5cff] text-[26px] text-white">
        <PlusIcon />
        Nový plán
      </button>
      <button className={`${plain} ml-5 w-[229px] gap-3`}>
        <PlusIcon />
        Nová složka
      </button>
      <div className="relative ml-5">
        <button aria-haspopup="menu" aria-expanded="true" className="flex h-16 w-[160px] items-center justify-center gap-[14px] rounded-md border-2 border-[#8f0000] bg-[#b10000] pr-1 text-[26px] text-white">
          Akce
          <Caret className="h-[11px] w-5" />
        </button>
        <ActionsMenu />
      </div>
      <button aria-label="Historie" className={`${plain} ml-5 w-[64px]`}>
        <MdHistory className="h-8 w-8" />
      </button>
      <button className={`${plain} ml-auto w-[257px] gap-3`}>
        <FaFilter className="h-6 w-6" />
        Filtrovat plány
      </button>
      <button className={`${plain} ml-5 w-[213px]`}>Kontrola verzí</button>
      <div className="ml-5 flex">
        <button aria-label="Mřížka" className="flex h-16 w-16 items-center justify-center rounded-l-md border-2 border-[#0b49cf] bg-[#0f5cff] text-white">
          <svg viewBox="0 0 22 22" className="h-[22px] w-[22px]" fill="currentColor">
            {[0, 8, 16].map((y) => [0, 8, 16].map((x) => <rect key={`${x}-${y}`} x={x} y={y} width="6" height="6" />))}
          </svg>
        </button>
        <button aria-label="Seznam" className="flex h-16 w-[61px] items-center justify-center rounded-r-md border-2 border-l-0 border-[#cdcfd4] bg-white">
          <svg viewBox="0 0 24 18" className="h-[18px] w-6">
            <path d="M0 2h24M0 9h24M0 16h24" stroke="#303133" strokeWidth="2.5" />
          </svg>
        </button>
      </div>
    </div>
  );
}

function SheetCard({ sheet }: { sheet: Sheet }) {
  return (
    <article
      className={`relative flex h-[258px] w-[344px] flex-col border-2 bg-white text-[#3b3b3b] ${
        sheet.selected ? "border-[#f0ad4e] shadow-[0_0_4px_4px_#f0ad4e]" : "border-[#c4c4c4] shadow-[0_2px_4px_rgba(0,0,0,0.2)]"
      }`}
    >
      <svg viewBox="0 0 340 176" className="h-[176px] w-full bg-white" role="img" aria-label={sheet.title}>
        <PlanDrawing kind={sheet.kind} />
        {sheet.marks}
      </svg>
      <div className="flex min-h-0 flex-1 flex-col justify-center border-t-2 border-[#ddd] px-2 pt-0.5 text-center">
        <h3 className="truncate text-[26px] leading-8 font-bold">{sheet.title}</h3>
        {sheet.subtitle && <p className="truncate text-[22px] leading-[30px]">{sheet.subtitle}</p>}
      </div>
      {sheet.selected && (
        <label className="absolute top-1 left-0.5 flex h-10 w-10 items-center justify-center">
          <input type="checkbox" defaultChecked aria-label={sheet.title} className="h-10 w-10 appearance-none rounded-[10px] border-4 border-[#fdb933] bg-white shadow-[inset_0_0_4px_2px_#ccc]" />
          <Tick />
        </label>
      )}
    </article>
  );
}

function FolderHeader({ name, info, partial, menu = true }: { name: string; info: string; partial?: boolean; menu?: boolean }) {
  return (
    <div className="flex h-11 items-center text-[26px] text-[#3b3b3b]">
      <label className="relative ml-7 flex h-9 w-8 items-center justify-center">
        <input type="checkbox" aria-label={name} className={`appearance-none rounded-md border-2 border-[#ddd] bg-white ${partial ? "h-9 w-9 shrink-0 shadow-[inset_0_0_4px_1px_#ccc]" : "h-8 w-8"}`} />
        {partial && <span className="pointer-events-none absolute h-1.5 w-[18px] bg-[#777]" />}
      </label>
      <FaFolderOpen className="ml-[15px] h-8 w-8" />
      <h2 className="ml-[11px] font-bold">{name}</h2>
      <span className="ml-[7px]">{info}</span>
      {menu && (
        <button aria-label="Možnosti složky" className="ml-[25px] flex h-11 w-11 items-center justify-center rounded-md border-2 border-[#cdcfd4] bg-white">
          <Caret className="h-[11px] w-5" />
        </button>
      )}
    </div>
  );
}

function SheetGrid({ sheets }: { sheets: Sheet[] }) {
  return (
    <div className="mt-[25px] mb-12 flex flex-wrap gap-5 pl-[74px]">
      {sheets.map((sheet) => (
        <SheetCard key={sheet.title} sheet={sheet} />
      ))}
      <button className="h-[258px] w-[344px] border-4 border-dashed border-[#c9c9c9] text-[26px] font-bold text-[#bbb]">+ Nový plán</button>
    </div>
  );
}

// Pink frame and arrow that point at the bulk actions menu
function Highlight() {
  return (
    <>
      <div className="pointer-events-none absolute top-[68px] left-[494px] z-30 h-[793px] w-[346px] rounded-[4px] border-6 border-[#fe2e6c]" />
      <svg viewBox="0 0 500 126" className="pointer-events-none absolute top-[160px] left-[695px] z-40 h-[126px] w-[500px] drop-shadow-[0_3px_3px_rgba(0,0,0,0.35)]" aria-hidden="true">
        <path d="M4 23L69 6L60 21L492 116Q497 119 494 121Q492 121 488 120L55 47L57 64Z" fill="#fe2e6c" />
      </svg>
    </>
  );
}

export default function App() {
  return (
    <div className="flex h-screen overflow-hidden bg-[#f5f6f7] font-['Lato',sans-serif]">
      <SharedPatterns />
      <Sidebar />
      <main className="relative flex min-w-0 flex-1 flex-col">
        <TopBar />
        <Toolbar />
        <section className="min-h-0 flex-1 overflow-hidden pt-8">
          <FolderHeader name="Všechny plány" info="(6 plánů vybráno / 10)" partial menu={false} />
          <SheetGrid sheets={allPlans} />
          <FolderHeader name="1. Půdorysy" info="(9 plánů)" />
          <SheetGrid sheets={floorPlans} />
          <FolderHeader name="2. Příčné a podélné řezy" info="(2 plánů)" />
        </section>
        <Highlight />
      </main>
      <div className="flex w-[30px] shrink-0 justify-center border-l-2 border-[#e8e8e8] bg-[#fafafa]">
        <div className="h-[47%] w-4 rounded-full bg-[#c1c1c1]" />
      </div>
    </div>
  );
}
